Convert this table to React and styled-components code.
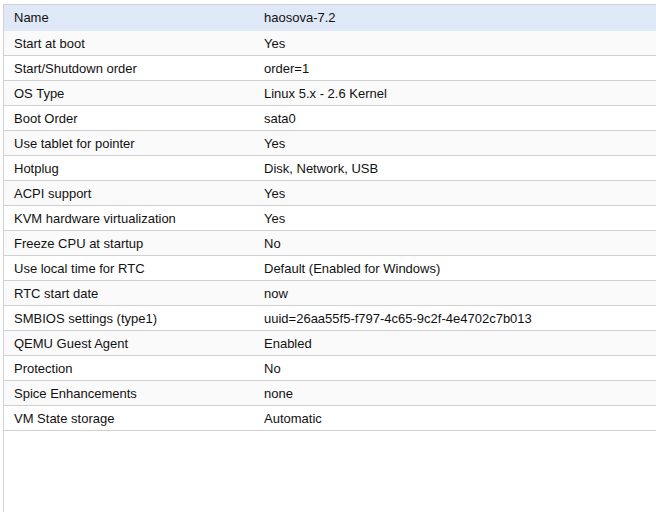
import styled, { createGlobalStyle } from 'styled-components';

const GlobalStyle = createGlobalStyle`
  body {
    margin: 0;
    background: #fff;
    font-family: "Liberation Sans", Arial, sans-serif;
  }
`;

const Panel = styled.div`
  width: 656px;
  height: 512px;
  padding: 4px 0 0 3px;
  box-sizing: border-box;
`;

const Grid = styled.div`
  height: 100%;
  border-left: 1px solid #d0d0d0;
  border-top: 1px solid #d0d0d0;
`;

const Row = styled.div`
  display: grid;
  grid-template-columns: 250px 1fr;
  height: ${(props) => (props.selected ? '26px' : '25px')};
  box-sizing: border-box;
  border-bottom: 1px solid ${(props) => (props.selected ? '#dfe8f6' : '#d0d0d0')};
  background: ${(props) => {
    if (props.selected) {
      return '#dfe8f6';
    } else if (props.odd) {
      return '#fafafa';
    }
    return '#fff';
  }};
`;

const Cell = styled.div`
  display: flex;
  align-items: center;
  padding: 0 10px;
  font-size: 13px;
  color: #111;
  white-space: nowrap;
  overflow: hidden;
`;

const rows = [
  ['Name', 'haosova-7.2'],
  ['Start at boot', 'Yes'],
  ['Start/Shutdown order', 'order=1'],
  ['OS Type', 'Linux 5.x - 2.6 Kernel'],
  ['Boot Order', 'sata0'],
  ['Use tablet for pointer', 'Yes'],
  ['Hotplug', 'Disk, Network, USB'],
  ['ACPI support', 'Yes'],
  ['KVM hardware virtualization', 'Yes'],
  ['Freeze CPU at startup', 'No'],
  ['Use local time for RTC', 'Default (Enabled for Windows)'],
  ['RTC start date', 'now'],
  ['SMBIOS settings (type1)', 'uuid=26aa55f5-f797-4c65-9c2f-4e4702c7b013'],
  ['QEMU Guest Agent', 'Enabled'],
  ['Protection', 'No'],
  ['Spice Enhancements', 'none'],
  ['VM State storage', 'Automatic'],
];

function App() {
  return (
    <>
      <GlobalStyle />
      <Panel>
        <Grid>
          {rows.map(([name, value], i) => (
            <Row key={name} selected={i === 0} odd={i % 2 === 1}>
              <Cell>{name}</Cell>
              <Cell>{value}</Cell>
            </Row>
          ))}
        </Grid>
      </Panel>
    </>
  );
}

export default App;
